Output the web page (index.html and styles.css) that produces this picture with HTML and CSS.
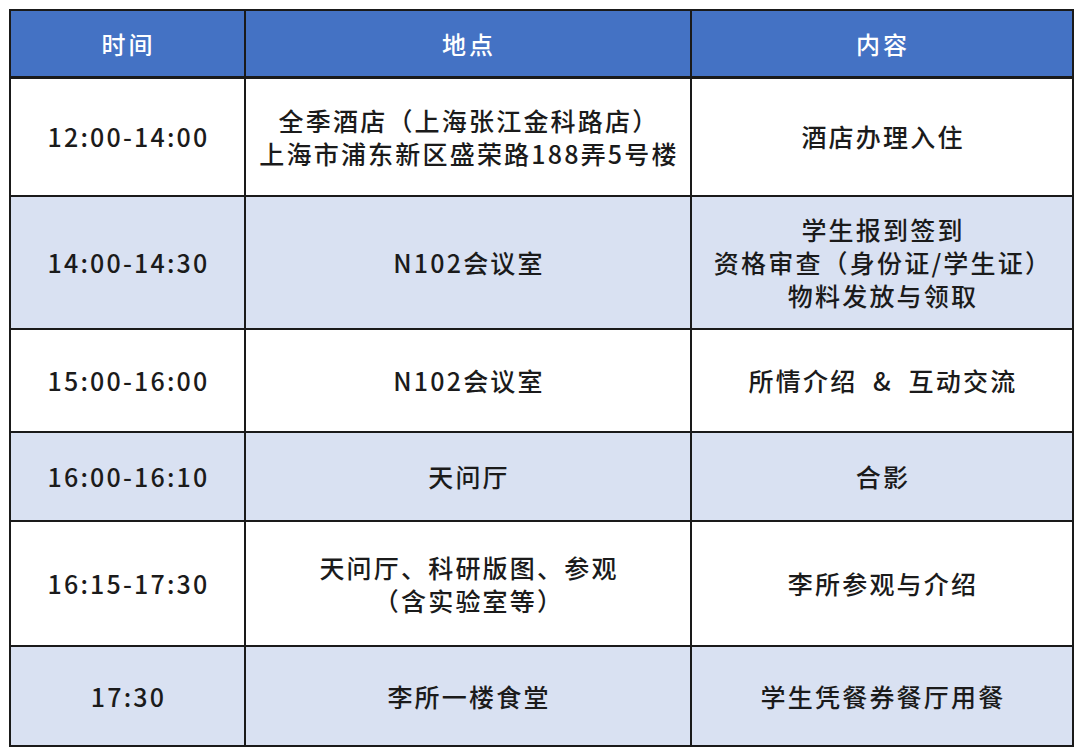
FILE: index.html
```html
<!DOCTYPE html>
<html lang="zh-CN">
<head>
<meta charset="utf-8">
<link rel="stylesheet" href="styles.css">
</head>
<body>
<table class="sched">
  <colgroup>
    <col class="c-time">
    <col class="c-place">
    <col class="c-content">
  </colgroup>
  <thead>
    <tr class="head">
      <th>时间</th>
      <th>地点</th>
      <th>内容</th>
    </tr>
  </thead>
  <tbody>
    <tr class="r1">
      <td class="time">12:00-14:00</td>
      <td>全季酒店（上海张江金科路店）<br>上海市浦东新区盛荣路188弄5号楼</td>
      <td>酒店办理入住</td>
    </tr>
    <tr class="r2 alt">
      <td class="time">14:00-14:30</td>
      <td>N102会议室</td>
      <td>学生报到签到<br>资格审查（身份证/学生证）<br>物料发放与领取</td>
    </tr>
    <tr class="r3">
      <td class="time">15:00-16:00</td>
      <td>N102会议室</td>
      <td>所情介绍&nbsp; &amp; &nbsp;互动交流</td>
    </tr>
    <tr class="r4 alt">
      <td class="time">16:00-16:10</td>
      <td>天问厅</td>
      <td>合影</td>
    </tr>
    <tr class="r5">
      <td class="time">16:15-17:30</td>
      <td>天问厅、科研版图、参观<br>（含实验室等）</td>
      <td>李所参观与介绍</td>
    </tr>
    <tr class="r6 alt">
      <td class="time">17:30</td>
      <td>李所一楼食堂</td>
      <td>学生凭餐券餐厅用餐</td>
    </tr>
  </tbody>
</table>
</body>
</html>
```
FILE: styles.css
```css
html, body {
  margin: 0;
  padding: 0;
  background: #ffffff;
}
body {
  padding: 9px 0 0 9px;
  font-family: "Noto Sans CJK SC", "Noto Sans", sans-serif;
  color: #1b1b1b;
}
.sched {
  border-collapse: collapse;
  table-layout: fixed;
  width: 1063px;
  border: 2px solid #1a1a1a;
}
.c-time { width: 235px; }
.c-place { width: 446px; }
.c-content { width: 382px; }
.sched th, .sched td {
  border: 2px solid #1a1a1a;
  text-align: center;
  vertical-align: middle;
  padding: 0 0 0 2px;
  font-size: 25px;
  font-weight: 500;
  letter-spacing: 2.2px;
  line-height: 33px;
}
.sched th {
  background: #4472c4;
  color: #ffffff;
  font-size: 24px;
  letter-spacing: 3px;
  border-bottom-width: 3px;
}
.head { height: 67px; }
.alt td { background: #d9e1f2; }
.time { letter-spacing: 1.5px; }
.r1 { height: 119px; }
.r2 { height: 133px; }
.r3 { height: 103px; }
.r4 { height: 89px; }
.r5 { height: 125px; }
.r6 { height: 100px; }
```
